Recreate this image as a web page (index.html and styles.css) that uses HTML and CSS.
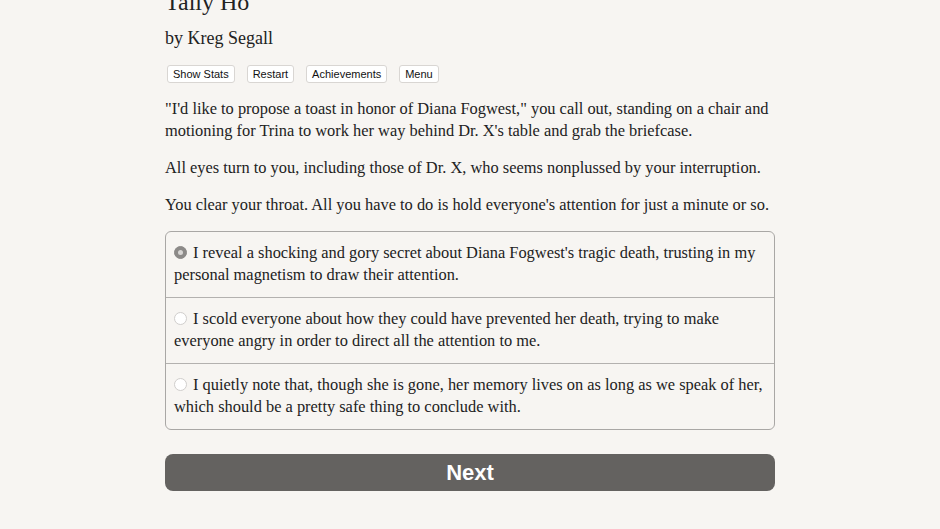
FILE: index.html
```html
<!DOCTYPE html>
<html>
<head>
<meta charset="utf-8">
<link rel="stylesheet" href="styles.css">
</head>
<body>
<div class="page">
  <h1 class="title">Tally Ho</h1>
  <h2 class="author">by Kreg Segall</h2>
  <div class="toolbar">
    <button class="tb">Show Stats</button>
    <button class="tb">Restart</button>
    <button class="tb">Achievements</button>
    <button class="tb">Menu</button>
  </div>
  <p>"I'd like to propose a toast in honor of Diana Fogwest," you call out, standing on a chair and motioning for Trina to work her way behind Dr. X's table and grab the briefcase.</p>
  <p>All eyes turn to you, including those of Dr. X, who seems nonplussed by your interruption.</p>
  <p>You clear your throat. All you have to do is hold everyone's attention for just a minute or so.</p>
  <div class="choices">
    <label class="choice"><span class="radio checked"></span>I reveal a shocking and gory secret about Diana Fogwest's tragic death, trusting in my personal magnetism to draw their attention.</label>
    <label class="choice"><span class="radio"></span>I scold everyone about how they could have prevented her death, trying to make everyone angry in order to direct all the attention to me.</label>
    <label class="choice"><span class="radio"></span>I quietly note that, though she is gone, her memory lives on as long as we speak of her, which should be a pretty safe thing to conclude with.</label>
  </div>
  <button class="next">Next</button>
</div>
</body>
</html>
```
FILE: styles.css
```css
html, body {
  margin: 0;
  padding: 0;
  background: #f7f5f2;
}
body {
  font-family: "Liberation Serif", serif;
  color: #222;
}
.page {
  width: 610px;
  margin: -13px auto 0 auto;
}
.title {
  font-weight: normal;
  font-size: 24px;
  line-height: 30px;
  margin: 0 0 9px 0;
}
.author {
  font-weight: normal;
  font-size: 18px;
  line-height: 24px;
  margin: 0 0 15px 0;
}
.toolbar {
  display: flex;
  gap: 12px;
  padding-left: 2px;
  margin-bottom: 15px;
}
.tb {
  font-family: "Liberation Sans", sans-serif;
  font-size: 11px;
  line-height: 14px;
  padding: 1px 5px;
  background: #ffffff;
  border: 1px solid #d9d6d3;
  border-radius: 3px;
  color: #111;
}
p {
  font-size: 16.4px;
  line-height: 22px;
  margin: 0 0 15px 0;
}
.choices {
  border: 1px solid #a9a7a5;
  border-radius: 6px;
  margin-top: 1px;
}
.choice {
  display: block;
  font-size: 16.4px;
  line-height: 22px;
  padding: 10px 8px 11px 8px;
  height: 44px;
  border-top: 1px solid #b3b1af;
}
.choice:first-child {
  border-top: none;
}
.radio {
  display: inline-block;
  position: relative;
  width: 13px;
  height: 13px;
  border: 1px solid #d0cecc;
  border-radius: 50%;
  background: #fff;
  margin-right: 6px;
  vertical-align: -1px;
  box-sizing: border-box;
}
.radio.checked {
  background: #8c8a88;
  border-color: #8c8a88;
}
.radio.checked::after {
  content: "";
  position: absolute;
  left: 3px;
  top: 3px;
  width: 5px;
  height: 5px;
  border-radius: 50%;
  background: #d8d6d4;
}
.next {
  display: block;
  width: 100%;
  height: 37px;
  margin-top: 24px;
  background: #646260;
  color: #fff;
  border: none;
  border-radius: 8px;
  font-family: "Liberation Sans", sans-serif;
  font-weight: bold;
  font-size: 22px;
  padding: 0;
}
```
